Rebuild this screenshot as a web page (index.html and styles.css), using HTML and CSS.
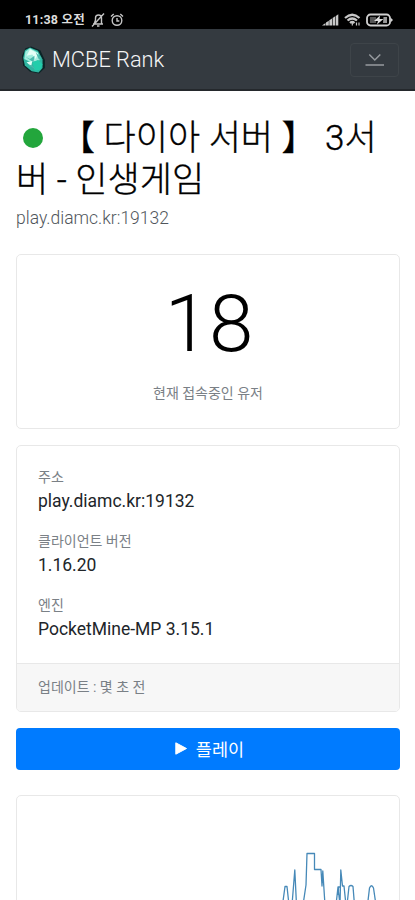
FILE: index.html
```html
<!DOCTYPE html>
<html lang="ko">
<head>
<meta charset="utf-8">
<meta name="viewport" content="width=device-width, initial-scale=1">
<title>MCBE Rank</title>
<link rel="stylesheet" href="styles.css">
</head>
<body>
<div class="statusbar">
  <span class="time">11:38 오전</span>
  <svg class="bell" width="14" height="16" viewBox="0 0 14 16" fill="none" stroke="#c4c4c4" stroke-width="1.4"><path d="M2 12h10M3.300 11.500L4.500 8V6a3 3 0 0 1 6 0v5.500M6 14h2.500M13 1.500L1 14.500"/></svg>
  <svg class="alarm" width="14" height="14" viewBox="0 0 14 14" fill="none" stroke="#c4c4c4" stroke-width="1.4"><circle cx="7" cy="7.500" r="4.800"/><path d="M7 5v3h2.300M1 3.500L3.700 1M13 3.500L10.300 1"/></svg>
  <span class="spacer"></span>
  <svg class="signal" width="17" height="12" viewBox="0 0 17 12" fill="#c8c8c8"><path d="M0 11.500l3.500-2.500v2.500zM4 8.500l2.800-1.800v4.800H4zM7.300 6.200l2.700-1.700v7H7.300zM10.600 4l2.600-1.700v9.200h-2.600zM13.800 1.900L16.300.3v11.200h-2.500z"/></svg>
  <svg class="wifi" width="17" height="14" viewBox="0 0 17 14" fill="none" stroke="#c8c8c8" stroke-width="2.200"><path d="M1 5q7.200-6.500 14.500 0M3.500 7.500q4.700-4 9.500 0M6 10q2.200-2 4.500 0"/><path d="M8.300 10v2.500M12.500 9.500v3M15 9.500v3" stroke-width="1.200"/></svg>
  <svg class="battery" width="27" height="14" viewBox="0 0 27 14"><rect x="1" y="1.500" width="23" height="11" rx="3.500" fill="none" stroke="#d0d0d0" stroke-width="1.800"/><path d="M24.500 4.500l2.500 2.500-2.500 2.500z" fill="#d0d0d0"/><rect x="4" y="4" width="6" height="6" fill="#555"/><path d="M14 2.500L8 8h4l-1 3.500L17.500 6h-4z" fill="#ddd"/><path d="M17.500 4h3.500v6h-4z" fill="#999"/></svg>
</div>
<nav class="navbar">
  <svg class="gem" width="24" height="28" viewBox="1 1 21 26" preserveAspectRatio="none">
    <path d="M9 1.500L4 3 1 10l1 9 6 6 8 1.500 5-5V14L17 5z" fill="#0b2426"/>
    <path d="M8 2.500L3.500 5 2 12l1.500 7 6 5.500 6 1 3.500-4v-8l-4-8z" fill="#2fb5a1"/>
    <path d="M8 3L4 6l-1 7 6 3 8-2-2-7z" fill="#a2eedf"/>
    <path d="M8 4l-3 6 5-1 3 4 2-5zM5 16l5-1-1 5z" fill="#e4fff7"/>
    <path d="M10 16l5-2 4 4-2 5-5 1z" fill="#22cdab"/>
    <path d="M4 11l4 2 4-3-1 6zM13 7l3 7 2-2zM6 18l4 1 3 4z" fill="#48b9ad"/>
  </svg>
  <span class="brand">MCBE Rank</span>
  <span class="toggler"><svg width="20" height="14" viewBox="0 0 20 14" fill="none" stroke="#979b9f" stroke-width="1.500"><path d="M4.300 1.500L9.800 7l5.500-5.500M.5 12h18.500"/></svg></span>
</nav>
<main>
  <h1><span class="dot"></span>【 다이아 서버 】 3서버 - 인생게임</h1>
  <p class="host">play.diamc.kr:19132</p>
  <section class="card count">
    <div class="number">18</div>
    <div class="caption">현재 접속중인 유저</div>
  </section>
  <section class="card details">
    <dl>
      <dt>주소</dt><dd>play.diamc.kr:19132</dd>
      <dt>클라이언트 버전</dt><dd>1.16.20</dd>
      <dt>엔진</dt><dd>PocketMine-MP 3.15.1</dd>
    </dl>
    <footer>업데이트 : 몇 초 전</footer>
  </section>
  <div class="play"><svg width="12" height="13" viewBox="0 0 12 13"><path d="M.8.800v11.400L11.500 6.500z" fill="#fff" stroke="#fff" stroke-linejoin="round"/></svg><span>플레이</span></div>
  <section class="card chart">
    <svg width="382" height="104" viewBox="17 796 382 104" fill="none" stroke="#4689b8" stroke-width="1.300" stroke-linejoin="round"><path d="M282.500 905L285 886.500H287L289 905M292 905L294.800 870L296.500 905M303 905L306 885 307 853.500H314.500V869.500H321L322 886 322.800 871 325 905M336 905L338 887 340 905 340.800 870 342.500 886H344L346 905M338.500 895V887H341M347 905L349 886.500Q351 884.500 353 886.500L354.500 905M367.500 905L369.500 888Q371.500 883.500 373.500 888L376 905"/></svg>
  </section>
</main>
</body>
</html>
```
FILE: styles.css
```css
* { box-sizing: border-box; }
html { overflow: hidden; }
body { margin: 0; height: 900px; overflow: hidden; background: #fff; color: #212529; font-family: Roboto, "Noto Sans CJK KR", sans-serif; font-size: 16px; }
svg { display: block; flex: none; }
.statusbar { height: 29px; background: #000; color: #ddd; display: flex; align-items: center; padding: 11px 22px 0 25px; }
.time { font-size: 12.5px; letter-spacing: .2px; font-weight: 700; line-height: 16px; white-space: nowrap; }
.bell { margin-left: 6px; }
.alarm { margin-left: 5px; }
.spacer { flex: 1; }
.wifi { margin-left: 5px; }
.battery { margin-left: 5px; }
.navbar { height: 62px; background: #343a40; border-bottom: 2px solid #24282c; display: flex; align-items: center; padding: 1px 16px 0 22px; }
.brand { margin-left: 6px; font-size: 21.8px; font-weight: 300; color: #f4f5f6; }
.toggler { margin-left: auto; width: 49px; height: 34px; border: 1px solid #3e4449; border-radius: 4px; display: flex; align-items: center; justify-content: center; }
main { padding: 27px 15px 0 16px; }
h1 { margin: 0; font-size: 35px; line-height: 42px; font-weight: 300; color: #000; word-break: break-all; -webkit-text-stroke: .35px #000; }
.dot { display: inline-block; width: 20px; height: 20px; border-radius: 50%; background: #23a63c; margin: 0 17px 0 7px; vertical-align: 2px; }
.host { margin: 3px 0 0; font-size: 17.5px; line-height: 26px; font-weight: 300; color: #50565b; }
.card { border: 1px solid #e8e8e8; border-radius: 5px; background: #fff; }
.count { height: 175px; margin-top: 23px; text-align: center; }
.number { font-size: 80px; line-height: 96px; font-weight: 300; color: #000; padding: 21px 0 0 2px; }
.caption { font-size: 14px; line-height: 20px; color: #7a8086; margin-top: 11px; }
.details { height: 267px; margin-top: 16px; display: flex; flex-direction: column; overflow: hidden; }
dl { margin: 0; padding: 21px 21px 0; flex: 1; }
dt { font-size: 14px; line-height: 20px; color: #7a8086; }
dd { margin: 0 0 16px; font-size: 17.5px; line-height: 28px; }
.details footer { height: 48px; padding: 0 21px; line-height: 47px; background: #f7f7f7; border-top: 1px solid #e8e8e8; font-size: 14px; color: #7a8086; }
.play { height: 42px; margin-top: 16px; border-radius: 4px; background: #007bff; color: #fff; display: flex; align-items: center; justify-content: center; gap: 9px; padding: 0 0 2px 3px; font-size: 17.5px; }
.chart { height: 120px; margin-top: 25px; overflow: hidden; }
```
